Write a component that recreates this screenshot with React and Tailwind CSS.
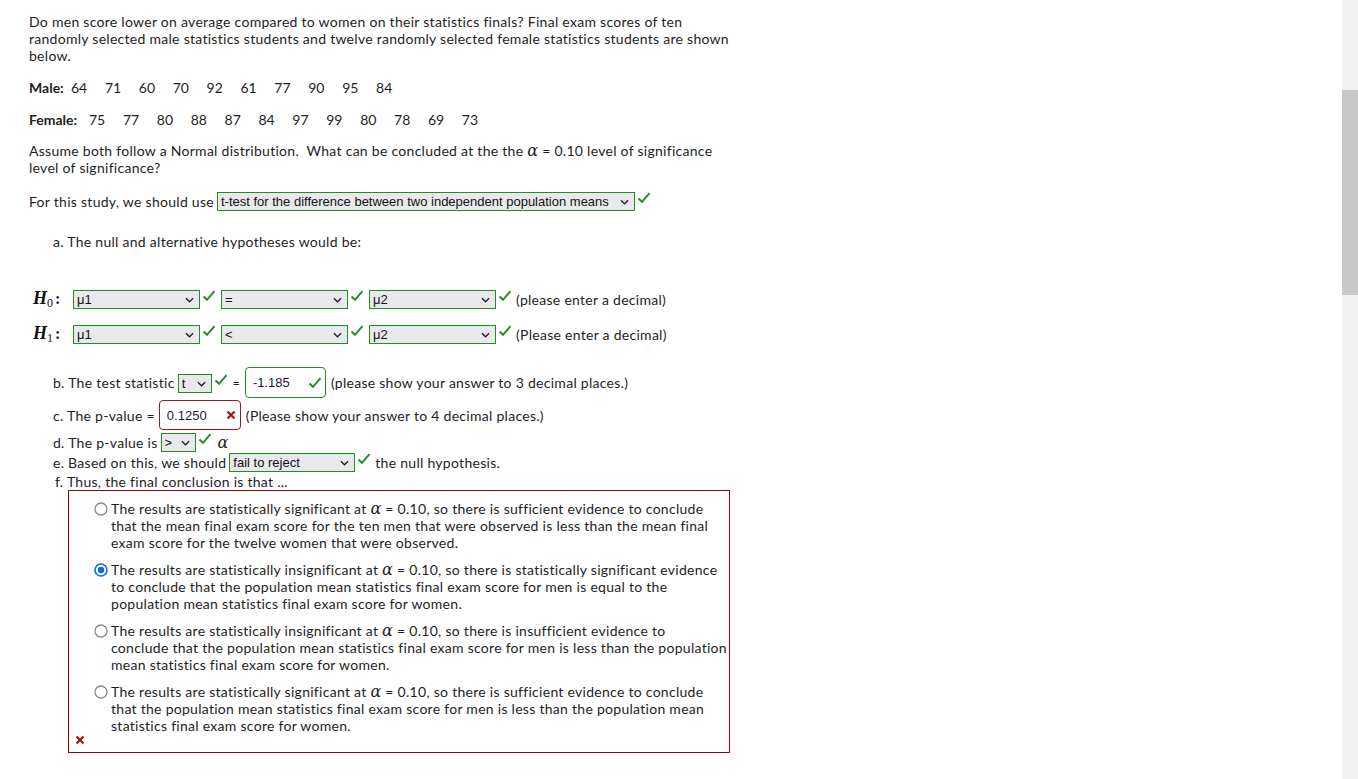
import React from "react";

const FONT = { fontFamily: "Lato, 'Open Sans', sans-serif" };

function Check({ className = "" }) {
  return (
    <svg viewBox="0 0 14 12" className={"w-[14px] h-[12px] shrink-0 " + className}>
      <path d="M1.5 6.5 L5 9.8 L12.5 1.2" fill="none" stroke="#2a8a2a" strokeWidth="2" />
    </svg>
  );
}

function Cross({ className = "" }) {
  return (
    <svg viewBox="0 0 10 10" className={"w-[10px] h-[10px] shrink-0 " + className}>
      <path d="M1.5 1.5 L8.5 8.5 M8.5 1.5 L1.5 8.5" fill="none" stroke="#a31515" strokeWidth="2.2" />
    </svg>
  );
}

function Chevron() {
  return (
    <svg viewBox="0 0 10 6" className="w-[9px] h-[6px] shrink-0">
      <path d="M1 1 L5 5 L9 1" fill="none" stroke="#222" strokeWidth="1.5" />
    </svg>
  );
}

function Sel({ w, text }) {
  return (
    <div
      className={"h-[19px] border border-[#1f8f1f] bg-[#e9e9ed] flex items-center pl-[3px] pr-[5px] text-[13px] tracking-normal text-[#111] " + w}
      style={{ fontFamily: "'Liberation Sans', Arial, sans-serif" }}
    >
      <span className="flex-1 whitespace-nowrap overflow-hidden">{text}</span>
      <Chevron />
    </div>
  );
}

function Alpha() {
  return (
    <span className="italic text-[16px] leading-[10px]" style={{ fontFamily: "'DejaVu Serif', 'Liberation Serif', serif" }}>
      α
    </span>
  );
}

function H({ sub }) {
  return (
    <span className="w-[40px] shrink-0 text-[#111] tracking-normal" style={{ fontFamily: "'Liberation Serif', 'DejaVu Serif', serif" }}>
      <span className="italic font-bold text-[18px]">H</span>
      <span className="text-[12px] relative top-[3px]">{sub}</span>
      <span className="text-[16px] font-bold ml-[2px]">:</span>
    </span>
  );
}

function Radio({ checked }) {
  return (
    <svg viewBox="0 0 14 14" className="w-[14px] h-[14px] shrink-0 mt-[1.5px]">
      {checked ? (
        <>
          <circle cx="7" cy="7" r="6" fill="white" stroke="#0a6cdc" strokeWidth="1.6" />
          <circle cx="7" cy="7" r="3.2" fill="#0a6cdc" />
        </>
      ) : (
        <circle cx="7" cy="7" r="6" fill="white" stroke="#8a8a8a" strokeWidth="1.3" />
      )}
    </svg>
  );
}

function Option({ checked, lines }) {
  return (
    <div className="flex gap-[3px] items-start">
      <Radio checked={checked} />
      <div className="whitespace-nowrap">
        {lines.map((l, i) => (
          <div key={i}>{l}</div>
        ))}
      </div>
    </div>
  );
}

const male = [64, 71, 60, 70, 92, 61, 77, 90, 95, 84];
const female = [75, 77, 80, 88, 87, 84, 97, 99, 80, 78, 69, 73];

export default function App() {
  return (
    <div className="h-[779px] w-full flex overflow-hidden bg-white text-[#1e1e1e] text-[14px] leading-[17px] tracking-[0.28px]" style={FONT}>
      <main className="flex-1 pl-[29px] pt-[13px]">
        <div className="w-[710px]">
          <p className="whitespace-nowrap">
            Do men score lower on average compared to women on their statistics finals? Final exam scores of ten
            <br />
            randomly selected male statistics students and twelve randomly selected female statistics students are shown
            <br />
            below.
          </p>

          <div className="mt-[15px] flex tracking-normal">
            <span className="w-[42px] font-bold">Male:</span>
            {male.map((n, i) => (
              <span key={i} className="w-[33.9px]">{n}</span>
            ))}
          </div>

          <div className="mt-[15px] flex tracking-normal">
            <span className="w-[60px] font-bold">Female:</span>
            {female.map((n, i) => (
              <span key={i} className="w-[33.9px]">{n}</span>
            ))}
          </div>

          <p className="mt-[14px] whitespace-nowrap">
            Assume both follow a Normal distribution.&nbsp; What can be concluded at the the <Alpha /> = 0.10 level of significance
            <br />
            level of significance?
          </p>

          <div className="mt-[16px] flex items-start">
            <span className="mt-[1px] mr-[3px]">For this study, we should use</span>
            <Sel w="w-[418px]" text="t-test for the difference between two independent population means" />
            <Check className="ml-[2px]" />
          </div>

          <div className="mt-[22px] pl-[24px]">a. The null and alternative hypotheses would be:</div>

          <div className="mt-[40px] pl-[4px] flex items-start">
            <H sub="0" />
            <Sel w="w-[127px]" text="μ1" />
            <Check className="ml-[2px] mr-[5px]" />
            <Sel w="w-[127px]" text="=" />
            <Check className="ml-[2px] mr-[5px]" />
            <Sel w="w-[127px]" text="μ2" />
            <Check className="ml-[2px] mr-[4px]" />
            <span className="mt-[1px]">(please enter a decimal)</span>
          </div>

          <div className="mt-[16px] pl-[4px] flex items-start">
            <H sub="1" />
            <Sel w="w-[127px]" text="μ1" />
            <Check className="ml-[2px] mr-[5px]" />
            <Sel w="w-[127px]" text="<" />
            <Check className="ml-[2px] mr-[5px]" />
            <Sel w="w-[127px]" text="μ2" />
            <Check className="ml-[2px] mr-[4px]" />
            <span className="mt-[1px]">(Please enter a decimal)</span>
          </div>

          <div className="mt-[23px] pl-[24px] flex items-center">
            <span className="mr-[3px]">b. The test statistic</span>
            <div className="flex items-start self-start mt-[7px]">
              <Sel w="w-[34px]" text="t" />
              <Check className="ml-[2px]" />
            </div>
            <span className="ml-[5px] mr-[5px] text-[12px]">=</span>
            <div className="w-[81px] h-[31px] border border-[#1f8f1f] rounded-[4px] flex items-center pl-[7px] pr-[3px] text-[13px] tracking-normal text-[#1a1a3a]" style={{ fontFamily: "'Liberation Sans', Arial, sans-serif" }}>
              <span className="flex-1">-1.185</span>
              <Check />
            </div>
            <span className="ml-[5px]">(please show your answer to 3 decimal places.)</span>
          </div>

          <div className="mt-[2px] pl-[24px] flex items-center">
            <span className="mr-[4px]">c. The p-value =</span>
            <div className="w-[82px] h-[30px] border border-[#a31515] rounded-[4px] flex items-center pl-[7px] pr-[4px] text-[13px] tracking-normal text-[#1a1a3a]" style={{ fontFamily: "'Liberation Sans', Arial, sans-serif" }}>
              <span className="flex-1">0.1250</span>
              <Cross />
            </div>
            <span className="ml-[5px]">(Please show your answer to 4 decimal places.)</span>
          </div>

          <div className="mt-[3px] pl-[24px] flex items-start">
            <span className="mt-[1px] mr-[3px]">d. The p-value is</span>
            <Sel w="w-[35px]" text=">" />
            <Check className="ml-[2px] mr-[6px]" />
            <span className="mt-[1px]"><Alpha /></span>
          </div>

          <div className="mt-[1px] pl-[24px] flex items-start">
            <span className="mt-[1px] mr-[3px]">e. Based on this, we should</span>
            <Sel w="w-[126px]" text="fail to reject" />
            <Check className="ml-[2px] mr-[4px]" />
            <span className="mt-[1px]">the null hypothesis.</span>
          </div>

          <div className="mt-[1px] pl-[26px]">f. Thus, the final conclusion is that ...</div>

          <div className="ml-[39px] w-[662px] h-[263px] border border-[#a00000] pt-[9px] pl-[25px] flex flex-col gap-[10px] relative">
            <Option
              lines={[
                <>The results are statistically significant at <Alpha /> = 0.10, so there is sufficient evidence to conclude</>,
                "that the mean final exam score for the ten men that were observed is less than the mean final",
                "exam score for the twelve women that were observed.",
              ]}
            />
            <Option
              checked
              lines={[
                <>The results are statistically insignificant at <Alpha /> = 0.10, so there is statistically significant evidence</>,
                "to conclude that the population mean statistics final exam score for men is equal to the",
                "population mean statistics final exam score for women.",
              ]}
            />
            <Option
              lines={[
                <>The results are statistically insignificant at <Alpha /> = 0.10, so there is insufficient evidence to</>,
                "conclude that the population mean statistics final exam score for men is less than the population",
                "mean statistics final exam score for women.",
              ]}
            />
            <Option
              lines={[
                <>The results are statistically significant at <Alpha /> = 0.10, so there is sufficient evidence to conclude</>,
                "that the population mean statistics final exam score for men is less than the population mean",
                "statistics final exam score for women.",
              ]}
            />
            <div className="absolute left-[6px] bottom-[7px]">
              <Cross />
            </div>
          </div>
        </div>
      </main>
      <div className="w-[16px] h-full bg-[#f1f1f1] flex flex-col">
        <div className="h-[90px]" />
        <div className="h-[205px] bg-[#c8c8c8]" />
      </div>
    </div>
  );
}
